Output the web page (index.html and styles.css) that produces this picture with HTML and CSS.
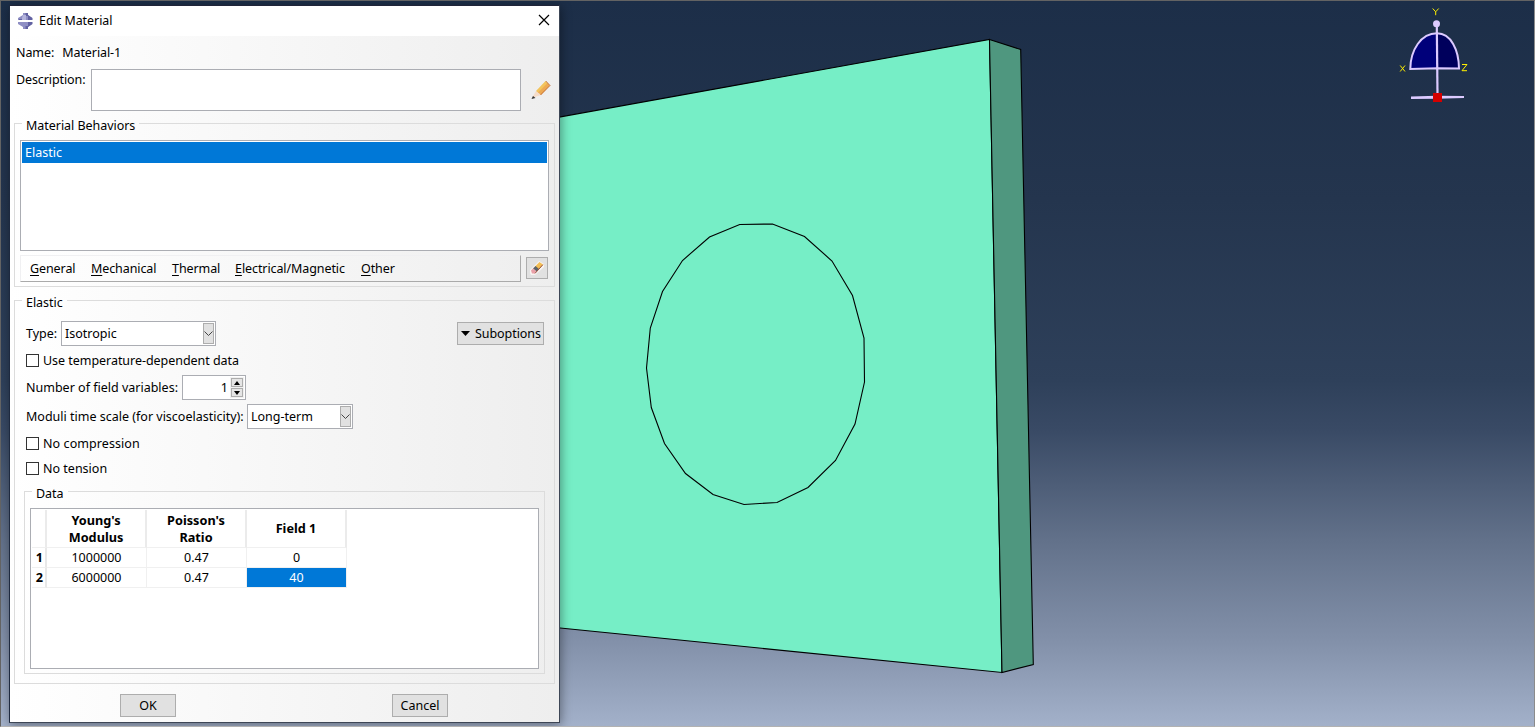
FILE: index.html
```html
<!DOCTYPE html>
<html lang="en">
<head>
<meta charset="utf-8">
<title>Edit Material</title>
<link rel="stylesheet" href="styles.css">
</head>
<body>
<main class="viewport">
  <svg class="scene" width="1535" height="727" viewBox="0 0 1535 727">
    <polygon class="front" points="500,127.8 989.5,39.5 1002,672.5 500,622"/>
    <polygon class="side" points="989.5,39.5 1020.7,49.5 1033.3,664.5 1002,672.5"/>
    <polygon class="hole" points="739.7,224.5 772.5,224 804.5,236.5 832,261 852.5,295.5 864,338 864.5,382 855,424 835.5,460.5 808,487.5 777,502.5 744,504.5 713,494.5 685.5,473.5 664.5,443.5 651.3,407.5 646.5,368 650.3,328 662.5,291.5 682.5,260.5 709.5,237"/>
    <g class="triad">
      <path class="plane" d="M1410.3 69C1410.5 50 1421 33.3 1437 33.3C1451 33.3 1458.8 50 1459 68.5L1437.5 68.5Z"/>
      <path class="plane-dark" d="M1437.5 34C1451 34 1458 50 1458.5 68L1437.5 68Z"/>
      <path class="arc" d="M1410.3 69C1410.5 50 1421 33.3 1437 33.3C1451 33.3 1458.8 50 1459 68.5L1437.5 68.2Z"/>
      <path class="axis" d="M1436.8 25L1437.5 94"/>
      <circle class="knob" cx="1436.5" cy="23.7" r="3.5"/>
      <path class="knob" d="M1411 96.4L1437 95.8L1464 96V98L1437 98.8L1411 99Z"/>
      <rect class="origin" x="1433" y="93" width="9" height="9"/>
      <path class="letters" d="M1432.7 8.5L1435.7 11.8L1438.7 8.5M1435.7 11.8V15.2M1400.2 65.5L1405 71.5M1405 65.5L1400.2 71.5M1462 64.5H1467L1462 70.7H1467"/>
    </g>
  </svg>

  <section class="dialog">
    <header class="titlebar">
      <svg class="logo" width="15" height="16" viewBox="0 0 15 16">
        <path fill="#8f8fc4" d="M5 0H10V2L14 5V7H0V5L5 2ZM0 9H14V11L10 14V16H5V14L0 11Z"/>
        <path fill="#6262a2" d="M7.5 0H10V2L14.5 5V7H10V3H7.5ZM10 9H14.5V11L10 14V16H7.5V13H10ZM1 6H4V7H1Z"/>
        <path fill="#b4b4dc" d="M5 2H8V7H4V5Z"/>
      </svg>
      <h1 class="title">Edit Material</h1>
      <svg class="close" width="12" height="12" viewBox="0 0 12 12"><path d="M1 1L11 11M11 1L1 11"/></svg>
    </header>
    <div class="body">
      <div class="name-row"><span>Name:</span><span>Material-1</span></div>
      <div class="desc-row">
        <label>Description:</label>
        <div class="textarea"></div>
        <svg class="pencil" width="20" height="20" viewBox="0 0 20 20">
          <path fill="#f6dcc8" d="M1 18L5 11L10 15Z"/>
          <path fill="#f3c45c" d="M5 11L14.5 1L17 3.5L7.5 13Z"/>
          <path fill="#eda952" d="M7 12.5L16.5 3L19 5.5L10 15Z"/>
          <path fill="none" stroke="#b9602e" stroke-width=".8" d="M9.5 15L19 5.5L14.8 1"/>
          <path fill="#333" d="M.5 19L2 16L4.5 18Z"/>
        </svg>
      </div>

      <fieldset class="group behaviors">
        <legend>Material Behaviors</legend>
        <div class="listbox"><div class="item">Elastic</div></div>
        <div class="menu-row">
          <nav class="menubar">
            <span class="m-general"><u>G</u>eneral</span>
            <span class="m-mech"><u>M</u>echanical</span>
            <span class="m-thermal"><u>T</u>hermal</span>
            <span class="m-elec"><u>E</u>lectrical/Magnetic</span>
            <span class="m-other"><u>O</u>ther</span>
          </nav>
          <button class="btn erase" aria-label="Delete">
            <svg width="14" height="14" viewBox="0 0 14 14">
              <path fill="#f8f4f2" d="M0 9L9 0L14 3V6L5 14H1L0 12Z"/>
              <path fill="#f2bd55" d="M5 5.5L9.5 1L13 3.5L8.5 8.5Z"/>
              <path fill="#5d6269" d="M3 7.5L5.5 5L9 8L6.5 10.5Z"/>
              <path fill="#e9a0a8" d="M1 9.5L3 7.5L6.5 10.5L4.5 12.5H2Z"/>
              <path fill="none" stroke="#94503c" d="M12.9 3.7L5 12.4"/>
            </svg>
          </button>
        </div>
      </fieldset>

      <fieldset class="group elastic">
        <legend>Elastic</legend>
        <div class="row type-row">
          <label>Type:</label>
          <div class="combo type"><span>Isotropic</span><i class="drop"><svg width="9" height="6" viewBox="0 0 9 6"><path d="M.5 .5L4.5 4.5L8.5 .5"/></svg></i></div>
          <button class="btn sub"><svg width="9" height="5" viewBox="0 0 9 5"><path d="M0 0H9L4.5 5Z"/></svg><span>Suboptions</span></button>
        </div>
        <label class="row check first"><i class="box"></i><span>Use temperature-dependent data</span></label>
        <div class="row fields">
          <label>Number of field variables:</label>
          <div class="spinner"><span>1</span>
            <div class="arrows"><i><svg width="6" height="4" viewBox="0 0 6 4"><path d="M0 4L3 0L6 4Z"/></svg></i><i><svg width="6" height="4" viewBox="0 0 6 4"><path d="M0 0H6L3 4Z"/></svg></i></div>
          </div>
        </div>
        <div class="row moduli">
          <label>Moduli time scale (for viscoelasticity):</label>
          <div class="combo term"><span>Long-term</span><i class="drop"><svg width="9" height="6" viewBox="0 0 9 6"><path d="M.5 .5L4.5 4.5L8.5 .5"/></svg></i></div>
        </div>
        <label class="row check comp"><i class="box"></i><span>No compression</span></label>
        <label class="row check tens"><i class="box"></i><span>No tension</span></label>

        <fieldset class="group data">
          <legend>Data</legend>
          <div class="grid-box">
            <table class="grid">
              <tr class="head"><th class="num"></th><th>Young's<br>Modulus</th><th>Poisson's<br>Ratio</th><th>Field 1</th></tr>
              <tr><th class="num">1</th><td>1000000</td><td>0.47</td><td>0</td></tr>
              <tr><th class="num">2</th><td>6000000</td><td>0.47</td><td class="selected">40</td></tr>
            </table>
          </div>
        </fieldset>
      </fieldset>

      <footer class="actions">
        <button class="btn action">OK</button>
        <button class="btn action">Cancel</button>
      </footer>
    </div>
  </section>
</main>
</body>
</html>
```
FILE: styles.css
```css
* { box-sizing: border-box; }
body { margin: 0; overflow: hidden; font: 12.5px/19px "Noto Sans", "Open Sans", sans-serif; color: #000; }
.viewport {
  position: relative; width: 1535px; height: 727px;
  background: linear-gradient(#1c2e48 0, #24354e 200px, #2e405a 380px, #394a65 430px, #62718a 540px, #8290a9 640px, #a3b1ca 727px);
}
.viewport::after {
  content: ""; position: absolute; inset: 0; pointer-events: none;
  border: 1px solid #636363; border-right-color: #8b8b8b; border-bottom-color: #b2b2b2;
}
.scene { display: block; }
.front { fill: #76eec6; stroke: #000; stroke-width: 1.1; }
.side { fill: #4f977f; stroke: #000; stroke-width: 1.1; }
.hole { fill: none; stroke: #000; stroke-width: 1.1; }
.plane { fill: #00007a; }
.plane-dark { fill: #00005c; }
.arc { fill: none; stroke: #dccaff; stroke-width: 2; }
.axis { fill: none; stroke: #dccaff; stroke-width: 2.2; }
.knob { fill: #dccaff; }
.origin { fill: #d40000; }
.letters { fill: none; stroke: #ffef00; stroke-width: 1; }

.dialog {
  position: absolute; left: 9px; top: 5px; width: 551px; height: 718px;
  display: flex; flex-direction: column;
  border: 1px solid #3d4656; border-top-color: #202438; border-left-color: #1e2a40;
  box-shadow: 1px 2px 10px rgba(0, 0, 0, .4);
}
.titlebar { display: flex; align-items: center; height: 30px; flex: none; padding: 0 9px 2px 8px; background: #fff; }
.logo { margin: 1px 6px 0 0; }
.title { margin: 1px auto 0 0; font-size: 12.4px; font-weight: 400; }
.close path { fill: none; stroke: #000; stroke-width: 1.2; }
.body { flex: 1; min-height: 0; background: linear-gradient(90deg, #fff, #eee); white-space: nowrap; }
.name-row { display: flex; gap: 8px; height: 33px; padding: 7px 6px 0; letter-spacing: -.08px; }
.desc-row { display: flex; height: 42px; padding-left: 6px; letter-spacing: -.1px; }
.desc-row label { width: 75px; padding-top: 1px; }
.textarea { width: 430px; background: #fff; border: 1px solid #abadb3; }
.pencil { margin: 11px 0 0 10px; }

.group { margin: 0; padding: 0; border: 1px solid #dcdcdc; min-width: 0; }
.group > legend { height: 1px; margin-left: 7px; padding: 0 4px; line-height: 5px; letter-spacing: -.04px; }
.behaviors { margin: 12px 4px 0; width: 541px; height: 164px; }
.listbox { width: 529px; height: 111px; margin: 16px 0 0 5px; padding: 1px; background: #fff; border: 1px solid #abadb3; }
.item { height: 21px; padding-left: 3px; background: #0078d7; color: #fff; line-height: 21px; }
.menu-row { display: flex; gap: 5px; margin: 4px 0 0 5px; }
.menubar {
  display: flex; align-items: center; width: 501px; height: 27px; padding-left: 9px;
  border: 1px solid #f0f0f2; border-right-color: #aaa; border-bottom-color: #aaa;
  letter-spacing: -.09px;
}
.menubar span { flex: none; }
.menubar u { text-underline-offset: 2px; }
.m-general { width: 61px; }
.m-mech { width: 81px; }
.m-thermal { width: 63px; }
.m-elec { width: 126px; }
.btn {
  display: flex; align-items: center; justify-content: center; padding: 0;
  border: 1px solid #adadad; background: #e1e1e1; color: #000; font: inherit;
}
.erase { width: 22px; height: 22px; margin-top: 2px; }

.elastic { margin: 13px 4px 0; width: 541px; height: 384px; }
.row { display: flex; align-items: center; padding-left: 11px; }
.type-row { height: 25px; margin-top: 20px; }
.type-row label { width: 35px; }
.combo { display: flex; align-items: center; justify-content: space-between; height: 25px; padding: 0 1px 0 3px; background: #fff; border: 1px solid #abadb3; }
.combo.type { width: 155px; }
.combo.term { width: 106px; }
.drop { display: flex; align-items: center; justify-content: center; width: 11px; height: 21px; background: #e1e1e1; border: 1px solid #adadad; }
.drop svg { flex: none; }
.drop path { fill: none; stroke: #444; }
.sub { width: 87px; height: 23px; margin-left: 241px; gap: 5px; padding-left: 1px; letter-spacing: -.06px; }
.check { height: 13px; }
.check.first { margin-top: 8px; letter-spacing: -.04px; }
.box { width: 13px; height: 13px; margin-right: 4px; border: 1px solid #333; background: #fff; }
.fields { height: 25px; margin-top: 8px; }
.fields label { width: 156px; }
.spinner { display: flex; align-items: center; justify-content: flex-end; width: 64px; height: 25px; background: #fff; border: 1px solid #abadb3; }
.arrows { width: 14px; height: 21px; margin: 0 1px 0 2px; display: flex; flex-direction: column; gap: 1px; background: #f0f0f0; padding: 1px; }
.arrows i { display: flex; align-items: center; justify-content: center; height: 9px; border: 1px solid #adadad; background: #e5e5e5; }
.moduli { height: 25px; margin-top: 4px; }
.moduli label { width: 221px; }
.comp { margin-top: 8px; letter-spacing: .08px; }
.tens { margin-top: 12px; }

.data { margin: 16px 0 0 9px; width: 521px; height: 183px; }
.grid-box { width: 509px; height: 161px; margin: 16px 0 0 5px; padding: 1px; background: #fff; border: 1px solid #abadb3; }
.grid { border-collapse: separate; border-spacing: 0; table-layout: fixed; width: 315px; text-align: center; font-size: 12.7px; line-height: 17px; }
.grid th, .grid td { width: 100px; height: 20px; padding: 0; border: 1px solid #f0f0f0; border-width: 0 1px 1px 0; }
.grid .head th { height: 38px; border-right: 2px solid #ebebeb; }
.grid .num { width: 15px; padding-left: 2px; border-right: 2px solid #e8e8e8; }
.grid td { font-size: 12.5px; }
.grid .selected { background: #0078d7; color: #fff; }

.actions { display: flex; gap: 216px; padding: 10px 0 0 110px; }
.action { width: 56px; height: 23px; }
```
